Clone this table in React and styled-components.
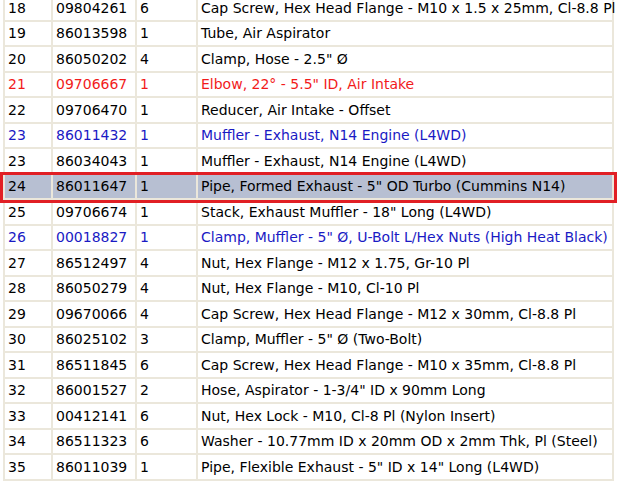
import React from "react";
import styled, { createGlobalStyle } from "styled-components";

const GlobalStyle = createGlobalStyle`
  html, body {
    margin: 0;
    padding: 0;
    background: #fff;
    overflow: hidden;
  }
`;

const Page = styled.div`
  width: 617px;
  height: 481px;
  overflow: hidden;
  background: #fff;
`;

const PartsTable = styled.table`
  margin-top: -4px;
  margin-left: 3px;
  width: 611px;
  table-layout: fixed;
  border-collapse: separate;
  border-spacing: 0;
  font-family: "DejaVu Sans", Verdana, sans-serif;
  font-size: 14px;
`;

const Row = styled.tr`
  color: ${(p) =>
    p.$tone === "red" ? "#f21b1b" : p.$tone === "blue" ? "#1a1ac4" : "#000"};
  background: ${(p) => (p.$selected ? "#b7bfd2" : "transparent")};
  outline: ${(p) => (p.$selected ? "3px solid #e11f24" : "none")};
`;

const Cell = styled.td`
  height: 23.5px;
  padding: 0 0 0 3px;
  border-left: 2px solid #ebe7db;
  border-bottom: 2px solid #ebe7db;
  white-space: nowrap;
  overflow: visible;
  vertical-align: middle;
  &:last-child {
    border-right: 2px solid #ebe7db;
  }
`;

const rows = [
  ["18", "09804261", "6", "Cap Screw, Hex Head Flange - M10 x 1.5 x 25mm, Cl-8.8 Pl"],
  ["19", "86013598", "1", "Tube, Air Aspirator"],
  ["20", "86050202", "4", "Clamp, Hose - 2.5\" Ø"],
  ["21", "09706667", "1", "Elbow, 22° - 5.5\" ID, Air Intake", "red"],
  ["22", "09706470", "1", "Reducer, Air Intake - Offset"],
  ["23", "86011432", "1", "Muffler - Exhaust, N14 Engine (L4WD)", "blue"],
  ["23", "86034043", "1", "Muffler - Exhaust, N14 Engine (L4WD)"],
  ["24", "86011647", "1", "Pipe, Formed Exhaust - 5\" OD Turbo (Cummins N14)", "selected"],
  ["25", "09706674", "1", "Stack, Exhaust Muffler - 18\" Long (L4WD)"],
  ["26", "00018827", "1", "Clamp, Muffler - 5\" Ø, U-Bolt L/Hex Nuts (High Heat Black)", "blue"],
  ["27", "86512497", "4", "Nut, Hex Flange - M12 x 1.75, Gr-10 Pl"],
  ["28", "86050279", "4", "Nut, Hex Flange - M10, Cl-10 Pl"],
  ["29", "09670066", "4", "Cap Screw, Hex Head Flange - M12 x 30mm, Cl-8.8 Pl"],
  ["30", "86025102", "3", "Clamp, Muffler - 5\" Ø (Two-Bolt)"],
  ["31", "86511845", "6", "Cap Screw, Hex Head Flange - M10 x 35mm, Cl-8.8 Pl"],
  ["32", "86001527", "2", "Hose, Aspirator - 1-3/4\" ID x 90mm Long"],
  ["33", "00412141", "6", "Nut, Hex Lock - M10, Cl-8 Pl (Nylon Insert)"],
  ["34", "86511323", "6", "Washer - 10.77mm ID x 20mm OD x 2mm Thk, Pl (Steel)"],
  ["35", "86011039", "1", "Pipe, Flexible Exhaust - 5\" ID x 14\" Long (L4WD)"],
];

export default function App() {
  return (
    <Page>
      <GlobalStyle />
      <PartsTable>
        <colgroup>
          <col style={{ width: 48 }} />
          <col style={{ width: 84 }} />
          <col style={{ width: 61 }} />
          <col />
        </colgroup>
        <tbody>
          {rows.map(([ref, part, qty, desc, flag], i) => (
            <Row key={i} $tone={flag} $selected={flag === "selected"}>
              <Cell>{ref}</Cell>
              <Cell>{part}</Cell>
              <Cell>{qty}</Cell>
              <Cell>{desc}</Cell>
            </Row>
          ))}
        </tbody>
      </PartsTable>
    </Page>
  );
}
